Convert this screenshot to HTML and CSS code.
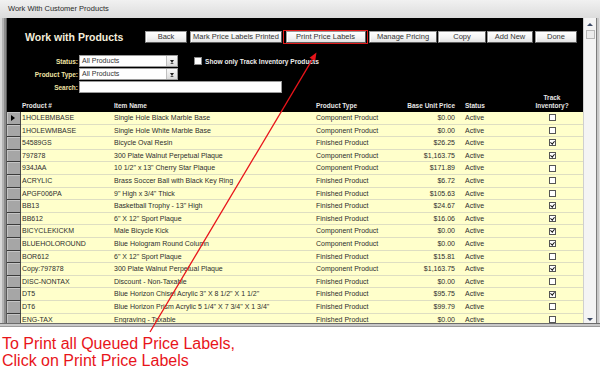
FILE: index.html
```html
<!DOCTYPE html>
<html>
<head>
<meta charset="utf-8">
<link rel="stylesheet" href="styles.css">
</head>
<body>
<div class="window">
  <div class="titlebar">Work With Customer Products</div>
  <div class="frame-body">
    <div class="lframe"></div>
    <div class="client">
      <div class="toolbar">
        <div class="form-title">Work with Products</div>
        <button class="btn w-back">Back</button>
        <button class="btn w-mark">Mark Price Labels Printed</button>
        <span class="hl"><button class="btn w-print">Print Price Labels</button></span>
        <button class="btn w-manage">Manage Pricing</button>
        <button class="btn w-copy">Copy</button>
        <button class="btn w-add">Add New</button>
        <button class="btn w-done">Done</button>
      </div>
      <div class="filters">
        <div class="frow">
          <span class="flabel">Status:</span>
          <span class="combo">All Products<span class="dd"><i></i></span></span>
          <span class="opt"><span class="fcb"></span>Show only Track Inventory Products</span>
        </div>
        <div class="frow">
          <span class="flabel">Product Type:</span>
          <span class="combo">All Products<span class="dd"><i></i></span></span>
        </div>
        <div class="frow">
          <span class="flabel">Search:</span>
          <span class="search"></span>
        </div>
      </div>
      <div class="grid">
        <div class="ghead">
          <span></span>
          <span class="c">Product #</span>
          <span class="c">Item Name</span>
          <span class="c">Product Type</span>
          <span class="c r">Base Unit Price</span>
          <span class="c st">Status</span>
          <span class="c tr">Track<br>Inventory?</span>
        </div>
        <div class="row"><span class="sel cur"></span><span class="c">1HOLEBMBASE</span><span class="c">Single Hole Black Marble Base</span><span class="c">Component Product</span><span class="c r">$0.00</span><span class="c st">Active</span><span class="c tr"><span class="cb"></span></span></div>
        <div class="row"><span class="sel"></span><span class="c">1HOLEWMBASE</span><span class="c">Single Hole White Marble Base</span><span class="c">Component Product</span><span class="c r">$0.00</span><span class="c st">Active</span><span class="c tr"><span class="cb"></span></span></div>
        <div class="row"><span class="sel"></span><span class="c">54589GS</span><span class="c">Bicycle Oval Resin</span><span class="c">Finished Product</span><span class="c r">$26.25</span><span class="c st">Active</span><span class="c tr"><span class="cb on"></span></span></div>
        <div class="row"><span class="sel"></span><span class="c">797878</span><span class="c">300 Plate Walnut Perpetual Plaque</span><span class="c">Component Product</span><span class="c r">$1,163.75</span><span class="c st">Active</span><span class="c tr"><span class="cb on"></span></span></div>
        <div class="row"><span class="sel"></span><span class="c">934JAA</span><span class="c">10 1/2" x 13" Cherry Star Plaque</span><span class="c">Component Product</span><span class="c r">$171.89</span><span class="c st">Active</span><span class="c tr"><span class="cb"></span></span></div>
        <div class="row"><span class="sel"></span><span class="c">ACRYLIC</span><span class="c">Brass Soccer Ball with Black Key Ring</span><span class="c">Finished Product</span><span class="c r">$6.72</span><span class="c st">Active</span><span class="c tr"><span class="cb"></span></span></div>
        <div class="row"><span class="sel"></span><span class="c">APGF006PA</span><span class="c">9" High x 3/4" Thick</span><span class="c">Finished Product</span><span class="c r">$105.63</span><span class="c st">Active</span><span class="c tr"><span class="cb"></span></span></div>
        <div class="row"><span class="sel"></span><span class="c">BB13</span><span class="c">Basketball Trophy - 13" High</span><span class="c">Finished Product</span><span class="c r">$24.67</span><span class="c st">Active</span><span class="c tr"><span class="cb on"></span></span></div>
        <div class="row"><span class="sel"></span><span class="c">BB612</span><span class="c">6" X 12" Sport Plaque</span><span class="c">Finished Product</span><span class="c r">$16.06</span><span class="c st">Active</span><span class="c tr"><span class="cb on"></span></span></div>
        <div class="row"><span class="sel"></span><span class="c">BICYCLEKICKM</span><span class="c">Male Bicycle Kick</span><span class="c">Component Product</span><span class="c r">$0.00</span><span class="c st">Active</span><span class="c tr"><span class="cb on"></span></span></div>
        <div class="row"><span class="sel"></span><span class="c">BLUEHOLOROUND</span><span class="c">Blue Hologram Round Column</span><span class="c">Component Product</span><span class="c r">$0.00</span><span class="c st">Active</span><span class="c tr"><span class="cb on"></span></span></div>
        <div class="row"><span class="sel"></span><span class="c">BOR612</span><span class="c">6" X 12" Sport Plaque</span><span class="c">Finished Product</span><span class="c r">$15.81</span><span class="c st">Active</span><span class="c tr"><span class="cb"></span></span></div>
        <div class="row"><span class="sel"></span><span class="c">Copy:797878</span><span class="c">300 Plate Walnut Perpetual Plaque</span><span class="c">Component Product</span><span class="c r">$1,163.75</span><span class="c st">Active</span><span class="c tr"><span class="cb on"></span></span></div>
        <div class="row"><span class="sel"></span><span class="c">DISC-NONTAX</span><span class="c">Discount - Non-Taxable</span><span class="c">Finished Product</span><span class="c r">$0.00</span><span class="c st">Active</span><span class="c tr"><span class="cb"></span></span></div>
        <div class="row"><span class="sel"></span><span class="c">DT5</span><span class="c">Blue Horizon Chisel Acrylic 3" X 8 1/2" X 1 1/2"</span><span class="c">Finished Product</span><span class="c r">$95.75</span><span class="c st">Active</span><span class="c tr"><span class="cb on"></span></span></div>
        <div class="row"><span class="sel"></span><span class="c">DT6</span><span class="c">Blue Horizon Prism Acrylic 5 1/4" X 7 3/4" X 1 3/4"</span><span class="c">Finished Product</span><span class="c r">$99.79</span><span class="c st">Active</span><span class="c tr"><span class="cb"></span></span></div>
        <div class="row"><span class="sel"></span><span class="c">ENG-TAX</span><span class="c">Engraving - Taxable</span><span class="c">Finished Product</span><span class="c r">$0.00</span><span class="c st">Active</span><span class="c tr"><span class="cb"></span></span></div>
      </div>
    </div>
    <div class="vscroll">
      <span class="sarrow up"></span>
      <span class="thumb"></span>
      <span class="spacer"></span>
      <span class="sarrow down"></span>
    </div>
    <div class="rframe"></div>
  </div>
  <div class="bframe"></div>
</div>
<p class="note">To Print all Queued Price Labels,<br>Click on Print Price Labels</p>
<svg class="arrow" width="600" height="369" viewBox="0 0 600 369">
  <line x1="150" y1="332" x2="312.4" y2="59.4" stroke="#e8141a" stroke-width="1.3"/>
  <polygon points="316.5,52.5 315.2,61.1 309.6,57.7" fill="#e8141a"/>
</svg>
</body>
</html>
```
FILE: styles.css
```css
html, body {
  margin: 0;
  padding: 0;
}
body {
  width: 600px;
  height: 369px;
  overflow: hidden;
  position: relative;
  background: #fff;
  font-family: "Liberation Sans", Arial, sans-serif;
}
.window {
  width: 600px;
  height: 327px;
  display: flex;
  flex-direction: column;
  background: #c4c4c4;
}
.titlebar {
  height: 18px;
  line-height: 18px;
  padding-left: 8px;
  font-size: 7.5px;
  color: #2a2a2a;
  background: linear-gradient(#f1f1f1, #dcdcdc);
}
.frame-body {
  display: flex;
  height: 305px;
}
.lframe {
  width: 7px;
  background: linear-gradient(to right, #d8d8d8 0 2px, #b4b4b4 2px 4px, #8c8c8c 4px 6px, #5a5a5a 6px 7px);
}
.client {
  width: 576px;
  background: #000;
  overflow: hidden;
  display: flex;
  flex-direction: column;
}
.vscroll {
  width: 13px;
  background: #f4f4f4;
  border-left: 1px solid #cfcfcf;
  box-sizing: border-box;
  display: flex;
  flex-direction: column;
  align-items: center;
  padding: 5px 0 2px;
}
.sarrow {
  width: 0;
  height: 0;
  border-left: 3px solid transparent;
  border-right: 3px solid transparent;
}
.sarrow.up { border-bottom: 3px solid #3c4a66; }
.sarrow.down { border-top: 3px solid #3c4a66; }
.thumb {
  margin-top: 4px;
  width: 7px;
  height: 7px;
  background: #ececec;
  border: 1px solid #b8b8b8;
}
.spacer { flex: 1; }
.rframe {
  width: 4px;
  background: linear-gradient(to right, #7c7c7c 0 1px, #c8c8c8 1px 3px, #e0e0e0 3px);
}
.bframe {
  height: 4px;
  background: linear-gradient(#6c6c6c 0 1px, #c8c8c8 1px 3px, #9a9a9a 3px);
}

/* toolbar */
.toolbar {
  display: flex;
  align-items: center;
  height: 14px;
  padding: 12px 0 0 18px;
}
.form-title {
  width: 120px;
  font-size: 10.5px;
  font-weight: bold;
  color: #f3eedb;
}
.btn {
  box-sizing: border-box;
  height: 12px;
  padding: 0;
  font-family: "Liberation Sans", Arial, sans-serif;
  font-size: 7.5px;
  line-height: 10px;
  color: #333;
  background: linear-gradient(#ffffff, #f2f2f2 60%, #e2e2e2);
  border: 1px solid #9a9a9a;
  border-right-color: #5e5e5e;
  border-bottom-color: #5e5e5e;
  box-shadow: inset 1px 1px #ffffff;
}
.w-back { width: 42px; }
.w-mark { width: 92px; margin-left: 3px; }
.hl {
  display: flex;
  margin-left: 1px;
  padding: 0 1.5px;
  border: 1.5px solid #e01a1a;
}
.w-print { width: 80px; }
.w-manage { width: 68px; margin-left: 1px; }
.w-copy { width: 48px; margin-left: 1px; }
.w-add { width: 46px; margin-left: 1px; }
.w-done { width: 42px; margin-left: 2px; }

/* filters */
.filters {
  margin-top: 11px;
  display: flex;
  flex-direction: column;
  gap: 1px;
}
.frow {
  display: flex;
  align-items: center;
  height: 12px;
}
.flabel {
  width: 71px;
  text-align: right;
  font-size: 6.5px;
  font-weight: bold;
  color: #efe3a4;
}
.combo {
  position: relative;
  box-sizing: border-box;
  width: 99px;
  height: 12px;
  margin-left: 1px;
  padding-left: 2px;
  background: #fff;
  border: 1px solid #9a9a9a;
  font-size: 7px;
  line-height: 10px;
  color: #333;
}
.dd {
  position: absolute;
  right: 0;
  top: 0;
  width: 10px;
  height: 10px;
  background: linear-gradient(#fafafa, #dcdcdc);
  border-left: 1px solid #c0c0c0;
  display: flex;
  align-items: center;
  justify-content: center;
}
.dd i {
  width: 0;
  height: 0;
  border-left: 2.5px solid transparent;
  border-right: 2.5px solid transparent;
  border-top: 3px solid #222;
  border-bottom: 1px solid #222;
  margin-top: 2px;
}
.opt {
  display: flex;
  align-items: center;
  margin-left: 16px;
  font-size: 6.6px;
  font-weight: bold;
  color: #ececec;
}
.fcb {
  box-sizing: border-box;
  width: 8px;
  height: 8px;
  margin-right: 3px;
  background: #fff;
  border: 1px solid #8a8a8a;
}
.search {
  box-sizing: border-box;
  width: 203px;
  height: 12px;
  margin-left: 1px;
  background: #fff;
  border: 1px solid #9a9a9a;
}

/* grid */
.grid {
  margin-top: 2px;
}
.ghead, .row {
  display: grid;
  grid-template-columns: 14px 91px 202px 90px 53px 64px 62px;
}
.ghead {
  height: 17px;
  align-items: end;
  font-size: 6.5px;
  font-weight: bold;
  color: #e6e6e6;
  line-height: 8px;
}
.ghead .c {
  padding-bottom: 2px;
}
.c {
  padding-left: 1px;
  white-space: nowrap;
  overflow: hidden;
}
.row {
  height: 12.6px;
  font-size: 7px;
  color: #2e2e2e;
  line-height: 11.6px;
}
.row .c {
  background: #ffffcb;
  border-bottom: 1px solid #dedec2;
}
.ghead .c:nth-child(3), .row .c:nth-child(3) { padding-left: 2px; }
.ghead .c:nth-child(4), .row .c:nth-child(4) { padding-left: 2px; }
.r {
  text-align: right;
  padding-right: 2px;
}
.st { padding-left: 8px; }
.tr {
  text-align: center;
  padding-left: 0;
}
.row .tr {
  display: flex;
  align-items: center;
  justify-content: center;
}
.sel {
  box-sizing: border-box;
  background: #a6a6a6;
  border-bottom: 1px solid #3a3a3a;
  border-right: 1px solid #4a4a4a;
  box-shadow: inset 1px 1px #c4c4c4;
  position: relative;
}
.sel.cur::after {
  content: "";
  position: absolute;
  left: 4px;
  top: 3px;
  border-top: 3px solid transparent;
  border-bottom: 3px solid transparent;
  border-left: 4px solid #000;
}
.cb {
  box-sizing: border-box;
  width: 7px;
  height: 7px;
  background: #fff;
  border: 1px solid #555;
  position: relative;
}
.cb.on::after {
  content: "";
  position: absolute;
  left: 1.3px;
  top: -0.2px;
  width: 1.6px;
  height: 3.2px;
  border-right: 1.2px solid #111;
  border-bottom: 1.2px solid #111;
  transform: rotate(40deg);
}

/* annotation */
.note {
  margin: 8px 0 0 2px;
  font-family: "Liberation Sans", Arial, sans-serif;
  font-size: 16px;
  line-height: 17px;
  color: #e8141a;
}
.arrow {
  position: absolute;
  left: 0;
  top: 0;
  pointer-events: none;
}
```
